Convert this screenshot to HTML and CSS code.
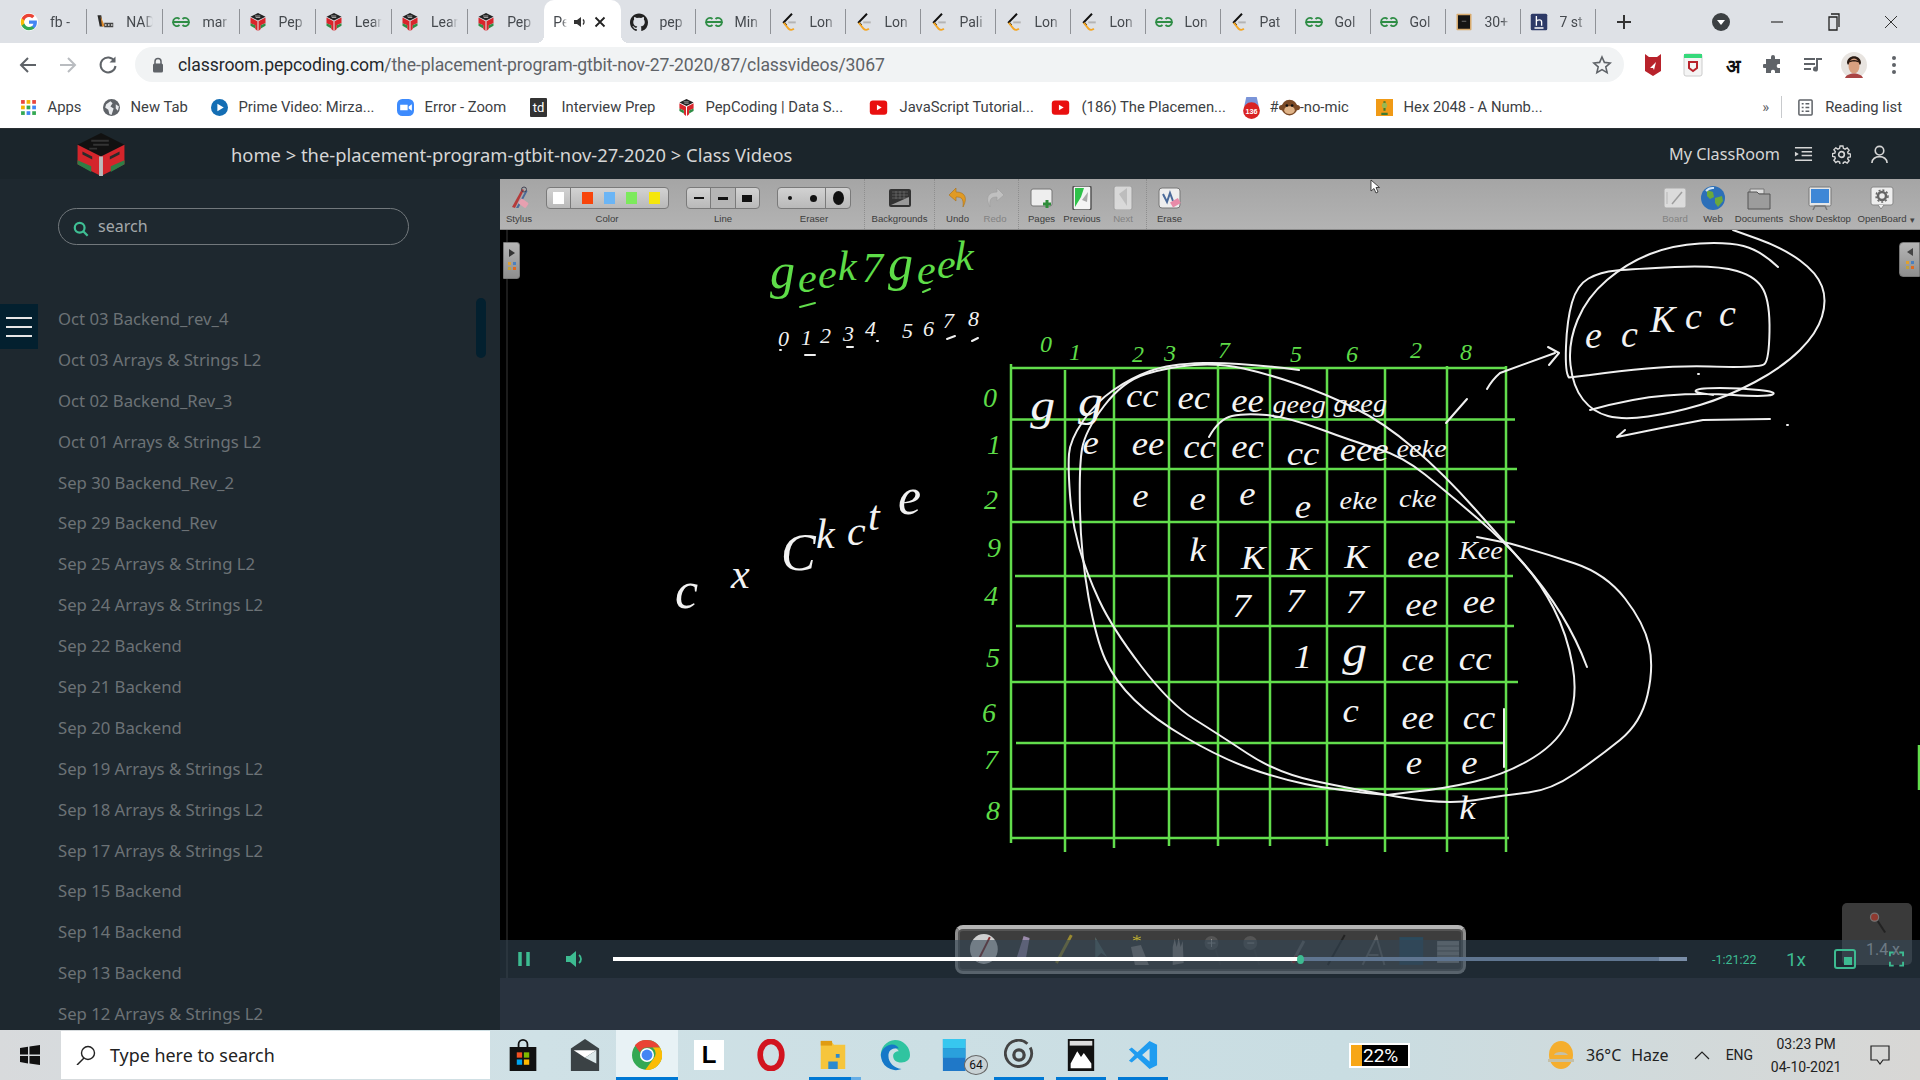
FILE: index.html
```html
<!DOCTYPE html>
<html lang="en">
<head>
<meta charset="utf-8">
<title>Class Videos</title>
<link rel="stylesheet" href="styles.css">
</head>
<body>
<svg class="sprite" aria-hidden="true">
  <symbol id="g" viewBox="0 0 24 24"><circle cx="12" cy="12" r="12" fill="#fff"/><path fill="#4285F4" d="M22.56 12.25c0-.78-.07-1.53-.2-2.25H12v4.26h5.92c-.26 1.37-1.04 2.53-2.21 3.31v2.77h3.57c2.08-1.92 3.28-4.74 3.28-8.09z"/><path fill="#34A853" d="M12 23c2.97 0 5.46-.98 7.28-2.66l-3.57-2.77c-.98.66-2.23 1.06-3.71 1.06-2.86 0-5.29-1.93-6.16-4.53H2.18v2.84C3.99 20.53 7.7 23 12 23z"/><path fill="#FBBC05" d="M5.84 14.09c-.22-.66-.35-1.36-.35-2.09s.13-1.43.35-2.09V7.07H2.18C1.43 8.55 1 10.22 1 12s.43 3.45 1.18 4.93l3.66-2.84z"/><path fill="#EA4335" d="M12 5.38c1.62 0 3.06.56 4.21 1.64l3.15-3.15C17.45 2.09 14.97 1 12 1 7.7 1 3.99 3.47 2.18 7.07l3.66 2.84c.87-2.6 3.3-4.53 6.16-4.53z"/></symbol>
  <symbol id="nad" viewBox="0 0 24 24"><path d="M2 3h5l2 15H5z" fill="#2a2a2a"/><path d="M6 4l6 14H8z" fill="#d9872b"/><path d="M11 13h12v6H11z" fill="#444"/><path d="M12 15h2v2h-2zm4 0h2v2h-2zm4 0h2v2h-2z" fill="#ddd"/></symbol>
  <symbol id="gfg" viewBox="0 0 24 24"><g fill="none" stroke="#2f8d46" stroke-width="2.4"><path d="M12 12H1.500a5 5 0 0 1 8.500-4M12 12h10.500a5 5 0 0 0-8.500-4"/><path d="M1.500 12a5 5 0 0 0 8.500 4M22.500 12a5 5 0 0 1-8.500 4"/></g></symbol>
  <symbol id="pep" viewBox="0 0 24 24"><path d="M12 0l10 5-10 5L2 5z" fill="#222"/><path d="M8 4h7M9 6h6" stroke="#ddd" stroke-width=".9"/><path d="M2 6l9.300 5V24l-3-2.600v-5L2 13.500z" fill="#d9252b"/><path d="M22 6l-9.300 5V24l3-2.600v-5l6.300-3z" fill="#d9252b"/><path d="M2 13.500v3.500l6.300 3.500v-4.200zM22 13.500v3.500l-6.300 3.500v-4.200z" fill="#2f8d46"/></symbol>
  <symbol id="lc" viewBox="0 0 24 24"><path d="M16 1L5 12.500l3.500 4" fill="none" stroke="#111" stroke-width="2.600"/><path d="M5 13l6.500 8c2 2 5 1.800 7-.2" fill="none" stroke="#f5a623" stroke-width="2.600"/><path d="M11 12.500h10" stroke="#b4b4b4" stroke-width="2.600"/></symbol>
  <symbol id="gh" viewBox="0 0 24 24"><path fill="#222" d="M12 .5C5.37.5 0 5.87 0 12.5c0 5.3 3.44 9.8 8.2 11.39.6.11.82-.26.82-.58v-2.03c-3.34.73-4.04-1.61-4.04-1.61-.55-1.39-1.33-1.76-1.33-1.76-1.09-.74.08-.73.08-.73 1.2.09 1.84 1.24 1.84 1.24 1.07 1.83 2.81 1.3 3.49 1 .11-.78.42-1.3.76-1.6-2.67-.3-5.47-1.33-5.47-5.93 0-1.31.47-2.38 1.24-3.22-.12-.3-.54-1.52.12-3.18 0 0 1.01-.32 3.3 1.23a11.5 11.5 0 0 1 6 0c2.29-1.55 3.3-1.23 3.3-1.23.66 1.66.24 2.88.12 3.18.77.84 1.24 1.91 1.24 3.22 0 4.61-2.81 5.63-5.48 5.92.43.37.81 1.1.81 2.22v3.29c0 .32.22.7.83.58A12 12 0 0 0 24 12.5C24 5.87 18.63.5 12 .5z"/></symbol>
  <symbol id="thirty" viewBox="0 0 24 24"><rect x="2" y="1" width="20" height="22" rx="1" fill="#d8ab6e"/><rect x="4" y="3" width="16" height="18" fill="#141414"/><path d="M9 11h6" stroke="#888"/></symbol>
  <symbol id="hh" viewBox="0 0 24 24"><rect x="1" y="1" width="22" height="22" rx="2" fill="#2d3a67"/><path d="M8.500 4v13M8.500 11c1-2 7-3 7 1v5M6 20h12" fill="none" stroke="#fff" stroke-width="1.800"/></symbol>
  <symbol id="yt" viewBox="0 0 24 24"><rect x="1" y="3" width="22" height="18" rx="4" fill="#e91010"/><path d="M10 8.500l6 3.500-6 3.500z" fill="#fff"/></symbol>
</svg>

<header class="browser">
  <div class="tabstrip">
    <div class="tab wide"><div class="tab-in"><svg class="fav"><use href="#g"/></svg><span class="tab-t">fb -</span></div></div>
    <div class="tab wide"><div class="tab-in"><svg class="fav"><use href="#nad"/></svg><span class="tab-t">NAD</span></div></div>
    <div class="tab wide"><div class="tab-in"><svg class="fav"><use href="#gfg"/></svg><span class="tab-t">mar</span></div></div>
    <div class="tab wide"><div class="tab-in"><svg class="fav"><use href="#pep"/></svg><span class="tab-t">Pep</span></div></div>
    <div class="tab wide"><div class="tab-in"><svg class="fav"><use href="#pep"/></svg><span class="tab-t">Lear</span></div></div>
    <div class="tab wide"><div class="tab-in"><svg class="fav"><use href="#pep"/></svg><span class="tab-t">Lear</span></div></div>
    <div class="tab wide nosep"><div class="tab-in"><svg class="fav"><use href="#pep"/></svg><span class="tab-t">Pep</span></div></div>
    <div class="tab wide active"><div class="tab-in"><span class="tab-t short">Pe</span>
      <svg class="tab-ico" viewBox="0 0 14 14"><path d="M1 5h3l4-3v10l-4-3H1z" fill="#333"/><path d="M10 4.500a3.500 3.500 0 0 1 0 5" fill="none" stroke="#333" stroke-width="1.300"/></svg>
      <svg class="tab-ico" viewBox="0 0 14 14"><path d="M2.500 2.500l9 9M11.500 2.500l-9 9" stroke="#222" stroke-width="1.800"/></svg></div></div>
    <div class="tab"><div class="tab-in"><svg class="fav"><use href="#gh"/></svg><span class="tab-t">pep</span></div></div>
    <div class="tab"><div class="tab-in"><svg class="fav"><use href="#gfg"/></svg><span class="tab-t">Min</span></div></div>
    <div class="tab"><div class="tab-in"><svg class="fav"><use href="#lc"/></svg><span class="tab-t">Lon</span></div></div>
    <div class="tab"><div class="tab-in"><svg class="fav"><use href="#lc"/></svg><span class="tab-t">Lon</span></div></div>
    <div class="tab"><div class="tab-in"><svg class="fav"><use href="#lc"/></svg><span class="tab-t">Pali</span></div></div>
    <div class="tab"><div class="tab-in"><svg class="fav"><use href="#lc"/></svg><span class="tab-t">Lon</span></div></div>
    <div class="tab"><div class="tab-in"><svg class="fav"><use href="#lc"/></svg><span class="tab-t">Lon</span></div></div>
    <div class="tab"><div class="tab-in"><svg class="fav"><use href="#gfg"/></svg><span class="tab-t">Lon</span></div></div>
    <div class="tab"><div class="tab-in"><svg class="fav"><use href="#lc"/></svg><span class="tab-t">Pat</span></div></div>
    <div class="tab"><div class="tab-in"><svg class="fav"><use href="#gfg"/></svg><span class="tab-t">Gol</span></div></div>
    <div class="tab"><div class="tab-in"><svg class="fav"><use href="#gfg"/></svg><span class="tab-t">Gol</span></div></div>
    <div class="tab"><div class="tab-in"><svg class="fav"><use href="#thirty"/></svg><span class="tab-t">30+</span></div></div>
    <div class="tab"><div class="tab-in"><svg class="fav"><use href="#hh"/></svg><span class="tab-t">7 st</span></div></div>
    <svg class="newtab" viewBox="0 0 16 16"><path d="M8 1v14M1 8h14" stroke="#333" stroke-width="2"/></svg>
    <svg class="tabsearch" viewBox="0 0 18 18"><circle cx="9" cy="9" r="9" fill="#3c4043"/><path d="M5 7h8l-4 5z" fill="#fff"/></svg>
    <div class="winctl">
      <svg viewBox="0 0 14 14"><path d="M1 7h12" stroke="#333" stroke-width="1.200"/></svg>
      <svg viewBox="0 0 14 18"><path d="M4 1h8v13M2 4h8v13H2z" fill="none" stroke="#222" stroke-width="1.300"/></svg>
      <svg viewBox="0 0 14 14"><path d="M1 1l12 12M13 1L1 13" stroke="#333" stroke-width="1"/></svg>
    </div>
  </div>
  <div class="toolbar">
    <svg class="nav" viewBox="0 0 20 20"><path d="M18 10H3M10 3l-7 7 7 7" fill="none" stroke="#5f6368" stroke-width="2"/></svg>
    <svg class="nav" viewBox="0 0 20 20"><path d="M2 10h15M10 3l7 7-7 7" fill="none" stroke="#b9bcc0" stroke-width="2"/></svg>
    <svg class="nav" viewBox="0 0 20 20"><path d="M16.500 6A7.500 7.500 0 1 0 17.500 11" fill="none" stroke="#5f6368" stroke-width="2"/><path d="M17.500 1.500v6h-6z" fill="#5f6368"/></svg>
    <div class="omni">
      <svg class="lock" viewBox="0 0 12 16"><path d="M3 7V4.500a3 3 0 0 1 6 0V7" fill="none" stroke="#5f6368" stroke-width="1.500"/><rect x="1" y="6.500" width="10" height="9" rx="1.500" fill="#5f6368"/></svg>
      <span class="url"><b>classroom.pepcoding.com</b>/the-placement-program-gtbit-nov-27-2020/87/classvideos/3067</span>
      <svg class="star" viewBox="0 0 20 20"><path d="M10 2l2.400 5.400 5.800.6-4.400 3.900 1.300 5.700-5.100-3-5.100 3 1.300-5.700L1.800 8l5.800-.6z" fill="none" stroke="#5f6368" stroke-width="1.600"/></svg>
    </div>
    <div class="exts">
      <svg viewBox="0 0 20 24"><path d="M2 1l4 3h8l4-3v17l-8 5-8-5z" fill="#b8222b"/><path d="M7 15l6-6-2 8-1-2z" fill="#fff"/></svg>
      <svg viewBox="0 0 20 24"><rect x="1" y="1" width="18" height="22" rx="2" fill="#f4f4f4" stroke="#ccc"/><rect x="1" y="1" width="18" height="4" fill="#36d97b"/><path d="M6 9h8v6l-4 3-4-3z" fill="none" stroke="#b8222b" stroke-width="2"/></svg>
      <span class="ext-hi">अ</span>
      <svg viewBox="0 0 20 20"><path d="M8 2a2 2 0 0 1 4 0v2h5v5h-2a2.200 2.200 0 0 0 0 4h2v5h-5v-2a2.200 2.200 0 0 0-4 0v2H3v-5H1a2.200 2.200 0 0 1 0-4h2V4h5z" fill="#5f6368"/></svg>
      <svg viewBox="0 0 20 20"><path d="M1 4h11M1 9h11M1 14h7" stroke="#5f6368" stroke-width="2"/><path d="M15 3v11a2.500 2.500 0 1 1-2-2.400V3h6v2h-4z" fill="#5f6368"/></svg>
      <svg class="avatar" viewBox="0 0 26 26"><circle cx="13" cy="13" r="13" fill="#e8e4e0"/><path d="M6 11c0-9 14-9 14 0l-1 2c-2-3-10-3-12 0z" fill="#2a1a12"/><ellipse cx="13" cy="14" rx="5.500" ry="7.500" fill="#d8a080"/><path d="M7 11c1-4 11-4 12 0-3-2-9-2-12 0z" fill="#2a1a12"/><path d="M4 26c2-6 16-6 18 0z" fill="#a44"/></svg>
      <svg viewBox="0 0 20 20"><circle cx="10" cy="3" r="2" fill="#5f6368"/><circle cx="10" cy="10" r="2" fill="#5f6368"/><circle cx="10" cy="17" r="2" fill="#5f6368"/></svg>
    </div>
  </div>
  <div class="bookmarks">
    <div class="bm"><svg class="bm-i" viewBox="0 0 16 16"><path d="M1 1h3.500v3.500H1z" fill="#e8453c"/><path d="M6.200 1h3.500v3.500H6.200z" fill="#f4b400"/><path d="M11.500 1H15v3.500h-3.500z" fill="#e8453c"/><path d="M1 6.200h3.500v3.500H1z" fill="#f4b400"/><path d="M6.200 6.200h3.500v3.500H6.200z" fill="#34a853"/><path d="M11.500 6.200H15v3.500h-3.500z" fill="#4285f4"/><path d="M1 11.500h3.500V15H1z" fill="#34a853"/><path d="M6.200 11.500h3.500V15H6.200z" fill="#4285f4"/><path d="M11.500 11.500H15V15h-3.500z" fill="#34a853"/></svg><span>Apps</span></div>
    <div class="bm"><svg class="bm-i" viewBox="0 0 16 16"><circle cx="8" cy="8" r="8" fill="#5f6368"/><path d="M3 5l4-3 2 2-2 3 3 2-2 6-2-1-1-4-3-2zM12 5l3 2-1 4-2-2z" fill="#e8eaed"/></svg><span>New Tab</span></div>
    <div class="bm"><svg class="bm-i" viewBox="0 0 16 16"><circle cx="8" cy="8" r="8" fill="#146eb4"/><path d="M6 4.500l6 3.500-6 3.500z" fill="#fff"/></svg><span>Prime Video: Mirza...</span></div>
    <div class="bm"><svg class="bm-i" viewBox="0 0 16 16"><rect width="16" height="16" rx="5" fill="#3d8bfd"/><path d="M3 5.500h7v5H3zM11 7l3-2v6l-3-2z" fill="#fff"/></svg><span>Error - Zoom</span></div>
    <div class="bm"><span class="td">td</span><span>Interview Prep</span></div>
    <div class="bm"><svg class="bm-i"><use href="#pep"/></svg><span>PepCoding | Data S...</span></div>
    <div class="bm"><svg class="bm-i yt"><use href="#yt"/></svg><span>JavaScript Tutorial...</span></div>
    <div class="bm"><svg class="bm-i yt"><use href="#yt"/></svg><span>(186) The Placemen...</span></div>
    <div class="bm"><svg class="bm-i tall" viewBox="0 0 16 22"><path d="M3 1h10l2 9H1z" fill="#7a94d8"/><circle cx="8" cy="14" r="8" fill="#d92323"/><text x="8" y="17.500" class="bm-badge">136</text></svg><span class="bm-mix">#<svg class="monkey" viewBox="0 0 16 16"><circle cx="8" cy="8" r="6" fill="#7b4a26"/><circle cx="2" cy="8" r="2" fill="#7b4a26"/><circle cx="14" cy="8" r="2" fill="#7b4a26"/><ellipse cx="8" cy="10" rx="4" ry="3" fill="#e0b488"/><circle cx="6" cy="6.500" r="1" fill="#111"/><circle cx="10" cy="6.500" r="1" fill="#111"/></svg>-no-mic</span></div>
    <div class="bm"><svg class="bm-i" viewBox="0 0 16 16"><rect width="16" height="16" fill="#f09a16"/><path d="M8 2v9M5 14h6" stroke="#3d7a30" stroke-width="2"/><circle cx="8" cy="6" r="2.500" fill="#9ab850"/></svg><span>Hex 2048 - A Numb...</span></div>
    <div class="bm-right">
      <span class="more">»</span>
      <svg class="bm-i" viewBox="0 0 16 18"><rect x="1" y="1" width="14" height="16" rx="1" fill="none" stroke="#5f6368" stroke-width="1.600"/><path d="M4 5h2M8 5h4M4 9h2M8 9h4M4 13h2M8 13h4" stroke="#5f6368" stroke-width="1.400"/></svg>
      <span>Reading list</span>
    </div>
  </div>
</header>

<nav class="apphead">
  <svg class="logo" viewBox="0 0 48 44">
    <path d="M24 0l24 12-24 12L0 12z" fill="#111"/><path d="M14 8h18M16 12h16M12 16h8" stroke="#333" stroke-width="2"/>
    <path d="M0 12l24 12v20L0 32z" fill="#d4252b"/><path d="M48 12L24 24v20l24-12z" fill="#d4252b"/>
    <path d="M0 28l14 6v6L0 32zM48 28l-14 6v6l14-8z" fill="#2f7d46"/>
    <path d="M22 24h4v20h-4z" fill="#bbb"/><path d="M5 19l10 5v3L5 22zM43 19l-10 5v3l10-5z" fill="#2b2b2b"/>
  </svg>
  <div class="crumb">home &gt; the-placement-program-gtbit-nov-27-2020 &gt; Class Videos</div>
  <div class="head-right">
    <span class="room">My ClassRoom</span>
    <svg viewBox="0 0 20 18"><path d="M1 2h18M8 6h11M8 10h11M1 15h18" stroke="#d6d6d6" stroke-width="1.600"/><path d="M1 6l4 2.500L1 11z" fill="#d6d6d6"/></svg>
    <svg viewBox="0 0 20 20"><circle cx="10" cy="10" r="3" fill="none" stroke="#d6d6d6" stroke-width="1.700"/><path d="M8.500 1h3l.5 2.500 1.800.8L16 3l2 2.500-1.500 2 .5 1.500 2.500.5v3l-2.500.5-.5 1.500 1.500 2-2 2.500-2.200-1.300-1.800.8-.5 2.400h-3L8 17.900l-1.800-.8L4 18.400 2 16l1.500-2-.5-1.500L.5 12V9L3 8.500 3.500 7 2 5l2-2 2.200 1.300L8 3.500z" fill="none" stroke="#d6d6d6" stroke-width="1.500"/></svg>
    <svg viewBox="0 0 20 20"><circle cx="10" cy="6" r="4.500" fill="none" stroke="#d6d6d6" stroke-width="1.700"/><path d="M2 19c0-9 16-9 16 0" fill="none" stroke="#d6d6d6" stroke-width="1.700"/></svg>
  </div>
</nav>

<main class="main">
  <aside class="sidebar">
    <div class="search">
      <svg viewBox="0 0 18 18"><circle cx="7.500" cy="7.500" r="5.500" fill="none" stroke="#3fbf94" stroke-width="2.500"/><path d="M11.500 11.500l5 5" stroke="#3fbf94" stroke-width="2.500"/></svg>
      <span>search</span>
    </div>
    <ul class="list">
      <li>Oct 03 Backend_rev_4</li>
      <li>Oct 03 Arrays &amp; Strings L2</li>
      <li>Oct 02 Backend_Rev_3</li>
      <li>Oct 01 Arrays &amp; Strings L2</li>
      <li>Sep 30 Backend_Rev_2</li>
      <li>Sep 29 Backend_Rev</li>
      <li>Sep 25 Arrays &amp; String L2</li>
      <li>Sep 24 Arrays &amp; Strings L2</li>
      <li>Sep 22 Backend</li>
      <li>Sep 21 Backend</li>
      <li>Sep 20 Backend</li>
      <li>Sep 19 Arrays &amp; Strings L2</li>
      <li>Sep 18 Arrays &amp; Strings L2</li>
      <li>Sep 17 Arrays &amp; Strings L2</li>
      <li>Sep 15 Backend</li>
      <li>Sep 14 Backend</li>
      <li>Sep 13 Backend</li>
      <li>Sep 12 Arrays &amp; Strings L2</li>
    </ul>
    <div class="burger"><i></i><i></i><i></i></div>
    <div class="thumb"></div>
  </aside>

  <section class="stage">
    <div class="tools">
      <div class="tool w38"><div class="ti"><svg class="i24" viewBox="0 0 24 24"><path d="M5 21L15 3l2 1L8 22z" fill="#b53a3a"/><path d="M9 22L19 4l1.500 1-9 17z" fill="#4a6a9a"/><circle cx="17" cy="3.500" r="2.500" fill="none" stroke="#445" stroke-width="1"/><rect x="12" y="14" width="9" height="6" rx="1" transform="rotate(35 16 17)" fill="#e6a0b0"/></svg></div><div class="tl">Stylus</div></div>
      <div class="tool w138"><div class="ti"><div class="seg colors"><span class="cell-w"><i class="sw white"></i></span><i class="sw red"></i><i class="sw blue"></i><i class="sw green"></i><i class="sw yellow"></i></div></div><div class="tl">Color</div></div>
      <div class="tool w94"><div class="ti"><div class="seg lines"><span><i class="ln l1"></i></span><span class="on"><i class="ln l2"></i></span><span><i class="ln l3"></i></span></div></div><div class="tl">Line</div></div>
      <div class="tool w88"><div class="ti"><div class="seg erasers"><span><i class="dot d1"></i></span><span><i class="dot d2"></i></span><span class="last"><i class="dot d3"></i></span></div></div><div class="tl">Eraser</div></div>
      <div class="tool w70 sep push6"><div class="ti"><svg class="i24" viewBox="0 0 24 24"><rect x="1" y="3" width="22" height="18" rx="2" fill="#333"/><path d="M4 6h16M4 9h16M4 12h16M8 5v8M12 5v8M16 5v8" stroke="#777" stroke-width=".6"/><path d="M3 19L21 11v8z" fill="#999"/></svg></div><div class="tl">Backgrounds</div></div>
      <div class="tool w46 sep"><div class="ti"><svg class="i24" viewBox="0 0 24 24"><path d="M10 2L3 9l7 6v-4c5 0 8 1 7 10 5-9 2-15-7-15z" fill="#e09a24" stroke="#a9701a" stroke-width=".6"/></svg></div><div class="tl">Undo</div></div>
      <div class="tool w30 mr8"><div class="ti dim"><svg class="i24" viewBox="0 0 24 24"><path d="M14 2l7 7-7 6v-4c-5 0-8 1-7 10C2 12 5 6 14 6z" fill="#c8c8c8" stroke="#999" stroke-width=".6"/></svg></div><div class="tl off">Redo</div></div>
      <div class="tool w46 sep"><div class="ti"><svg class="i24" viewBox="0 0 24 24"><rect x="1" y="3" width="21" height="17" rx="2" fill="#eee" stroke="#777"/><path d="M17 14v8M13 18h8" stroke="#2f8d3a" stroke-width="3"/></svg></div><div class="tl">Pages</div></div>
      <div class="tool w36"><div class="ti"><svg class="i24" viewBox="0 0 24 24"><rect x="3" y="0" width="18" height="24" rx="2" fill="#f4f4f4" stroke="#555" stroke-width="1.500"/><path d="M5 2h9l-3 9-6 10z" fill="#2fc24a"/><path d="M12 14l6-8-1 10z" fill="#aaa"/></svg></div><div class="tl">Previous</div></div>
      <div class="tool w46"><div class="ti dim"><svg class="i24" viewBox="0 0 24 24"><rect x="3" y="0" width="18" height="24" rx="2" fill="#e8e8e8" stroke="#999"/><path d="M8 8l8-6v18z" fill="#c4c4c4"/></svg></div><div class="tl off">Next</div></div>
      <div class="tool w46 sep"><div class="ti"><svg class="i24" viewBox="0 0 24 24"><rect x="1" y="2" width="21" height="20" rx="3" fill="#eee" stroke="#777"/><path d="M5 8l4 8 3-9 3 8" stroke="#4a6a9a" stroke-width="2" fill="none"/><rect x="13" y="14" width="9" height="6" transform="rotate(-30 17 17)" fill="#e88aa8"/></svg></div><div class="tl">Erase</div></div>
      <div class="tools-right">
        <div class="tool w38"><div class="ti dim"><svg class="i24" viewBox="0 0 24 24"><rect x="1" y="2" width="22" height="20" rx="2" fill="#ececec" stroke="#aaa"/><path d="M9 18L19 6" stroke="#999" stroke-width="1.500"/><path d="M4 6v12" stroke="#bbb"/></svg></div><div class="tl off">Board</div></div>
        <div class="tool w38"><div class="ti"><svg class="i24" viewBox="0 0 24 24"><circle cx="12" cy="12" r="12" fill="#2c6fb8"/><path d="M6 4l6 2 1 5-4 2-3-3zM14 12l7-2 1 5-5 6-3-4z" fill="#6aa83c"/><path d="M5 5a9 9 0 0 1 8-3" stroke="#cfe4f6" stroke-width="2" fill="none"/></svg></div><div class="tl">Web</div></div>
        <div class="tool w54"><div class="ti"><svg class="i24" viewBox="0 0 24 24"><path d="M3 3h14v5H3z" fill="#ddd" stroke="#777"/><path d="M1 6h9l2 2h11v15H1z" fill="#9c9c9c" stroke="#555"/></svg></div><div class="tl">Documents</div></div>
        <div class="tool w68"><div class="ti"><svg class="i24" viewBox="0 0 24 24"><rect x="1" y="1" width="22" height="19" rx="1.500" fill="#e6e6e6" stroke="#777"/><rect x="3" y="3" width="18" height="14" fill="#3f87d6"/><path d="M5 24l2-4h10l2 4" fill="none" stroke="#777" stroke-width="1.500"/></svg></div><div class="tl">Show Desktop</div></div>
        <div class="tool w56"><div class="ti"><svg class="i24" viewBox="0 0 24 24"><rect x="1" y="1" width="22" height="18" rx="2" fill="#eee" stroke="#888"/><path d="M8 19l3 4 3-4" fill="#eee" stroke="#888"/><circle cx="12" cy="10" r="4" fill="none" stroke="#666" stroke-width="2.500"/><circle cx="12" cy="10" r="6" fill="none" stroke="#666" stroke-width="1.500" stroke-dasharray="2 2"/></svg></div><div class="tl">OpenBoard</div></div>
        <div class="caret">▾</div>
      </div>
      <svg class="cursor" viewBox="0 0 10 15"><path d="M1 1v11l3-2.500 2 4.500 2-1-2-4.500h3.500z" fill="#fff" stroke="#222" stroke-width=".8"/></svg>
    </div>

    <div class="canvas">
      <svg class="board" viewBox="500 230 1420 748">
        <path class="edge" d="M507 230V978"/>
        <g class="gridlines">
          <path d="M1011 364V843M1065 370V852M1114 368V848M1169 368V846M1218 364V846M1270 368V846M1327 368V846M1385 368V852M1447 366V852M1506 366V852"/>
          <path d="M1010 368H1507M1010 419.500H1515M1011 469H1517M1012 522H1515M1015 576H1513M1016 626H1514M1011 682H1518M1016 743H1504M1010 789H1508M1011 838H1509"/>
          <path d="M1919 745V790"/>
        </g>
        <g class="strokes">
          <path d="M1387 795Q1334 790 1305 784T1247.500 767.500T1186.500 738T1134.500 700T1105.500 660T1088.500 597T1080 511T1082 449T1104 406T1146 374T1194 365T1243.500 368.500T1297 384T1354.500 408T1413.500 448T1475 509T1523 563T1553.500 608T1572.500 665T1569 718.500T1533.500 757.500T1475 781.500T1415 791.500L1387 795"/>
          <path d="M1299 370Q1238 362 1203.500 363T1150 371T1113.500 390T1083 421T1069 454T1070 495T1079 547T1099 600T1141 666T1194 719T1247.500 753.500T1314.500 781T1399 797T1476 800T1528.500 792.500T1575 773.500T1620 740T1647.500 695T1649 645T1625 598.500T1575 563.500T1510 543.500L1477 537"/>
          <path d="M1209 437Q1219 419 1232 416T1266.500 415T1320 429T1377 448.500T1425 474.500T1477 518T1523 563"/>
          <path d="M1523 563Q1567 613 1587 667"/>
          <path d="M1487 389Q1492 380 1500 373L1555 353"/>
          <path d="M1548 347L1559 353L1549 365"/>
          <path d="M1467 399L1446 423"/>
          <path d="M1504 709V767"/>
          <path d="M1590 375Q1660 365 1710 366.500T1764.500 364T1769.500 331.500T1763.500 290T1737 271T1675 267T1616.500 270.500T1588.500 278.500T1572 302.500T1566 346.500T1569 377.500L1590 375"/>
          <path d="M1778 267Q1760 250 1743.500 246T1700 243.500T1650 254T1607 280T1577.500 320T1570.500 365T1583 399.500T1608 416T1648 416.500T1700 405T1755 382T1800 350T1822 316.500T1822 286.500T1800 260.500T1758 239L1733 230"/>
          <path d="M1590 410Q1633 398 1666.500 395.500T1733.500 395T1772.500 394.500T1759 390T1720 388T1696.500 390T1703 393.500L1713 395"/>
          <path d="M1617 437Q1660 428 1703 420L1770 419M1617 437L1625 430"/>
          <path d="M805 355H815M847 347H853M947 339L955 336M972 341L978 338"/>
          <path d="M1698 374h1M1787 425h1M780 350h1M877 341h1"/>
          <path class="grn" d="M800 307L815 303M923 292L930 289"/>
        </g>
        <g class="ink green">
          <text class="bigg" x="770" y="288">g</text>
          <text class="big" x="798 818 838 862" y="292 288 280 282">eek7</text>
          <text class="bigg" x="888" y="280">g</text>
          <text class="big" x="917 937 955" y="284 278 270">eek</text>
          <text class="num" x="1040" y="352">0</text><text class="num" x="1069" y="360">1</text><text class="num" x="1132" y="362">2</text><text class="num" x="1164" y="361">3</text><text class="num" x="1218" y="358">7</text><text class="num" x="1290" y="362">5</text><text class="num" x="1346" y="362">6</text><text class="num" x="1410" y="358">2</text><text class="num" x="1460" y="360">8</text>
          <text class="lnum" x="983" y="407">0</text><text class="lnum" x="987" y="454">1</text><text class="lnum" x="984" y="509">2</text><text class="lnum" x="987" y="557">9</text><text class="lnum" x="984" y="605">4</text><text class="lnum" x="986" y="667">5</text><text class="lnum" x="982" y="722">6</text><text class="lnum" x="984" y="769">7</text><text class="lnum" x="986" y="820">8</text>
        </g>
        <g class="ink white">
          <text class="mid" x="778 801 820 843 865 902 923 943 968" y="346 345 343 341 336 338 336 328 326">012345678</text>
          <text class="huge" x="675" y="608">c</text>
          <text class="xl" x="731" y="588">x</text>
          <text class="huge" x="781" y="570">C</text>
          <text class="xl" x="816" y="548">k</text>
          <text class="xl" x="847" y="545">c</text>
          <text class="xl" x="868" y="530">t</text>
          <text class="huge" x="898" y="514">e</text>
          <text class="box" x="1585" y="348">e</text><text class="box" x="1621" y="347">c</text><text class="box" x="1650" y="332">K</text><text class="box" x="1685" y="329">c</text><text class="box" x="1719" y="326">c</text>
        </g>
        <g class="cells" transform="translate(970 330) scale(.3827 .3444)">
          <text class="c-lg" x="190" y="260">g</text><text class="c-lg" x="315" y="250">g</text><text x="450" y="225">cc</text><text x="585" y="228">ec</text><text x="725" y="238">ee</text><text class="c-sm" x="860" y="240">geeg</text><text class="c-sm" x="1020" y="238">geeg</text>
          <text x="315" y="360">e</text><text x="465" y="362">ee</text><text x="600" y="372">cc</text><text x="725" y="372">ec</text><text x="870" y="392">cc</text><text x="1030" y="380">eee</text><text class="c-sm" x="1180" y="368">eeke</text>
          <text x="445" y="515">e</text><text x="595" y="522">e</text><text x="725" y="508">e</text><text x="870" y="545">e</text><text class="c-sm" x="1015" y="520">eke</text><text class="c-sm" x="1170" y="515">cke</text>
          <text x="595" y="672">k</text><text x="740" y="695">K</text><text x="860" y="698">K</text><text x="1010" y="692">K</text><text x="1185" y="690">ee</text><text class="c-sm" x="1335" y="665">Kee</text>
          <text x="710" y="832">7</text><text x="850" y="818">7</text><text x="1005" y="822">7</text><text x="1180" y="830">ee</text><text x="1330" y="822">ee</text>
          <text x="870" y="982">1</text><text class="c-lg" x="1005" y="975">g</text><text x="1170" y="990">ce</text><text x="1320" y="988">cc</text>
          <text x="995" y="1138">c</text><text x="1170" y="1160">ee</text><text x="1330" y="1158">cc</text>
          <text x="1160" y="1288">e</text><text x="1305" y="1290">e</text>
          <text x="1300" y="1420">k</text>
        </g>
      </svg>

      <div class="side-tab left"><svg viewBox="0 0 12 30"><path d="M3 3l6 4-6 4z" fill="#333"/><path d="M2 16h3v3H2z" fill="#e0a030"/><path d="M7 16h3v3H7z" fill="#4a80c0"/><path d="M2 21h3v3H2z" fill="#c0a040"/><path d="M7 21h3v3H7z" fill="#e06a20"/></svg></div>
      <div class="side-tab right"><svg viewBox="0 0 12 30"><path d="M9 3L3 7l6 4z" fill="#444"/><path d="M2 16h3v3H2z" fill="#e0a030"/><path d="M7 16h3v3H7z" fill="#4a80c0"/><path d="M2 21h3v3H2z" fill="#c0a040"/><path d="M7 21h3v3H7z" fill="#e06a20"/></svg></div>

      <div class="dock">
        <svg viewBox="0 0 500 34">
          <ellipse cx="22" cy="16" rx="14" ry="15" fill="#cfcfcf"/><path d="M16 28L28 4" stroke="#8a3030" stroke-width="2"/>
          <path d="M54 28L62 3l6 2-4 22z" fill="#9a8aaa"/>
          <path d="M95 30L110 2" stroke="#9a8a30" stroke-width="3"/>
          <path d="M134 4v22l6-6 6 4z" fill="#566"/>
          <path d="M170 14l10-2 8 20h-14z" fill="#8a8482"/><path d="M176 2v6M172 4l8 3M180 4l-8 3" stroke="#c0b030"/>
          <path d="M212 32V14l2-8 2 8 2-9 2 9 2-6 1 22z" fill="#8a8482"/>
          <circle cx="251" cy="10" r="7" fill="#555"/><path d="M247 10h8M251 6v8" stroke="#999"/><path d="M255 16l5 16" stroke="#444" stroke-width="2"/>
          <circle cx="290" cy="10" r="7" fill="#555"/><path d="M287 10h7" stroke="#999"/><path d="M294 16l5 16" stroke="#444" stroke-width="2"/>
          <path d="M332 30l12-22" stroke="#666" stroke-width="3"/><path d="M333 30l4-7" stroke="#922" stroke-width="3"/>
          <path d="M368 32L385 2" stroke="#222" stroke-width="2"/>
          <path d="M403 32L417 4l8 28M409 22h10" fill="none" stroke="#666" stroke-width="2"/>
          <rect x="440" y="4" width="24" height="28" fill="#2c4a5c"/>
          <rect x="478" y="8" width="24" height="22" fill="#8a8a8a"/><path d="M478 13h24M478 18h24M478 23h24" stroke="#555"/>
        </svg>
      </div>

      <div class="magnifier">
        <svg viewBox="0 0 24 32"><circle cx="9" cy="10" r="5" fill="#8f3a30" stroke="#777" stroke-width="1.500"/><path d="M13 15l9 14" stroke="#222" stroke-width="2.500"/></svg>
        <span>1.4 x</span>
      </div>

      <div class="controls">
        <div class="ctl w50"><svg class="ico16" viewBox="0 0 14 16"><path d="M2 1v14M10 1v14" stroke="#3dbb91" stroke-width="3.500"/></svg></div>
        <div class="ctl w50"><svg class="ico20" viewBox="0 0 20 20"><path d="M1 7h4l6-5v16l-6-5H1z" fill="#3dbb91"/><path d="M14 6a5 5 0 0 1 0 8" fill="none" stroke="#3dbb91" stroke-width="1.800"/></svg></div>
        <div class="bar"><div class="played"></div><div class="knob"></div><div class="buffered"></div><div class="rest"></div></div>
        <span class="time">-1:21:22</span>
        <span class="speed">1x</span>
        <svg class="pip" viewBox="0 0 22 20"><rect x="1" y="1" width="20" height="18" rx="2" fill="none" stroke="#3dbb91" stroke-width="2"/><rect x="10" y="8" width="8" height="8" fill="#3dbb91"/></svg>
        <svg class="fs" viewBox="0 0 16 16"><path d="M1 5V1h4M11 1h4v4M15 11v4h-4M5 15H1v-4" fill="none" stroke="#3dbb91" stroke-width="2"/></svg>
      </div>
    </div>
    <div class="foot"></div>
  </section>
</main>

<footer class="taskbar">
  <svg class="start" viewBox="0 0 20 20"><path d="M0 3l8-1.200V9.500H0zM9.500 1.500L20 0v9.500H9.500zM0 11h8v7.500L0 17zM9.500 11H20v9L9.500 18.500z" fill="#111"/></svg>
  <div class="tsearch">
    <svg viewBox="0 0 20 20"><circle cx="12" cy="8" r="6.500" fill="none" stroke="#222" stroke-width="1.400"/><path d="M8 13l-7 7" stroke="#222" stroke-width="1.500"/></svg>
    <span>Type here to search</span>
  </div>
  <div class="apps">
    <div class="app"><svg viewBox="0 0 30 36"><path d="M10 10V6a5 5 0 0 1 10 0v4" fill="none" stroke="#111" stroke-width="2"/><rect y="9" width="30" height="27" fill="#111"/><path d="M8 15h6v6H8z" fill="#f25022"/><path d="M16 15h6v6h-6z" fill="#7fba00"/><path d="M8 23h6v6H8z" fill="#00a4ef"/><path d="M16 23h6v6h-6z" fill="#ffb900"/></svg></div>
    <div class="app"><svg viewBox="0 0 30 34"><path d="M15 0l15 10v24H0V10z" fill="#3b4245"/><path d="M3 12h24L15 20z" fill="#fff"/><path d="M15 20l12-8v14z" fill="#dce8ea"/></svg></div>
    <div class="app run act"><svg viewBox="0 0 32 32"><circle cx="16" cy="16" r="16" fill="#34a853"/><path d="M16 0a16 16 0 0 1 13.900 8H16a8 8 0 0 0-7.500 5.200L3 5.500A16 16 0 0 1 16 0z" fill="#ea4335"/><path d="M29.900 8A16 16 0 0 1 14 31.900L22.900 20A8 8 0 0 0 22 8z" fill="#fbbc05"/><circle cx="16" cy="16" r="7.500" fill="#fff"/><circle cx="16" cy="16" r="5.800" fill="#4285f4"/></svg></div>
    <div class="app"><div class="ltile">L</div></div>
    <div class="app"><svg viewBox="0 0 30 34"><ellipse cx="15" cy="17" rx="11.500" ry="14.500" fill="none" stroke="#d2141f" stroke-width="6"/></svg></div>
    <div class="app run part"><svg viewBox="0 0 30 34"><path d="M2 2h11l3 4h12v26H2z" fill="#f6c53c"/><path d="M2 2h12v5H2z" fill="#e09c12"/><path d="M12 20h6v-4h4v4M10 24h10v8h-10z" fill="#2b8ad0"/></svg></div>
    <div class="app"><svg viewBox="0 0 32 32"><path d="M16 0a16 16 0 0 1 16 16c0 5-4 8-9 8-6 0-9-3-9-7 0-3 3-5 6-5-1-3-5-5-9-4-5 1-9 5-10 10A16 16 0 0 1 16 0z" fill="#30c4a0"/><path d="M1 15c1-5 5-9 10-10 4-1 8 1 9 4-7-1-11 2-11 8 0 7 6 13 14 14A16 16 0 0 1 1 15z" fill="#1578c8"/></svg></div>
    <div class="app"><svg viewBox="0 0 30 34"><path d="M0 0h24v34H0z" fill="#1f78c8"/><path d="M0 0h24v10H0z" fill="#37c7ef"/><path d="M0 10h24v10H0z" fill="#2aa0dc"/></svg><span class="count">64</span></div>
    <div class="app run"><svg viewBox="0 0 32 32"><path d="M25 4a14 14 0 1 0 3 4" fill="none" stroke="#444" stroke-width="3"/><circle cx="16" cy="16" r="5.500" fill="none" stroke="#444" stroke-width="3.500"/></svg></div>
    <div class="app run"><svg viewBox="0 0 28 34"><rect width="28" height="34" fill="#111"/><rect x="2" y="2" width="24" height="5" fill="#ddd"/><path d="M3 26l7-13 4 6 3-4 8 11v5H3z" fill="#fff"/></svg></div>
    <div class="app run"><svg viewBox="0 0 32 32"><path d="M23 1l8 4v22l-8 4L10 19l-6 5-3-2 6-6-6-6 3-2 6 5z" fill="#1f9cf0"/><path d="M23 9l-8 7 8 7z" fill="#d2e2e6"/></svg></div>
  </div>
  <div class="tray">
    <div class="battery"><i></i><span>22%</span></div>
    <svg class="sun" viewBox="0 0 26 28"><ellipse cx="13" cy="14" rx="12" ry="14" fill="#f5ae2e"/><path d="M0 18h26v3H0zM6 14c1-4 12-4 14 0z" fill="#c4c0a8"/></svg>
    <span class="temp">36°C</span><span class="haze">Haze</span>
    <svg class="chev" viewBox="0 0 16 10"><path d="M1 9l7-7 7 7" fill="none" stroke="#222" stroke-width="1.200"/></svg>
    <span class="eng">ENG</span>
    <div class="clock"><span>03:23 PM</span><span>04-10-2021</span></div>
    <svg class="notif" viewBox="0 0 20 20"><path d="M1 1h18v14h-6l-3 4-3-4H1z" fill="none" stroke="#222" stroke-width="1.200"/></svg>
  </div>
</footer>
</body>
</html>
```
FILE: styles.css
```css
* { box-sizing: border-box; }
html, body { margin: 0; padding: 0; }
body { width: 1920px; height: 1080px; overflow: hidden; font-family: Roboto, "Liberation Sans", sans-serif; background: #1d272e; }
.sprite { display: block; width: 0; height: 0; overflow: hidden; }

/* browser chrome */
.browser { height: 129px; background: #fff; border-bottom: 1px solid #2a2f33; }
.tabstrip { height: 43px; background: #dee1e6; display: flex; align-items: center; padding-left: 11px; }
.tab { width: 75px; height: 43px; flex: none; display: flex; align-items: center; position: relative; }
.tab.wide { width: 76.2px; }
.tab-in { flex: 1; min-width: 0; height: 25px; display: flex; align-items: center; gap: 12px; padding: 0 9px; border-right: 1px solid #8f9297; }
.tab.nosep .tab-in { border-right-color: transparent; }
.tab.active { background: #fff; height: 43px; border-radius: 10px 10px 0 0; align-self: flex-end; }
.tab.active::before, .tab.active::after { content: ""; position: absolute; bottom: 0; width: 8px; height: 8px; }
.tab.active::before { left: -8px; background: radial-gradient(circle at 0 0, transparent 8px, #fff 8px); }
.tab.active::after { right: -8px; background: radial-gradient(circle at 100% 0, transparent 8px, #fff 8px); }
.tab.active .tab-in { border: 0; gap: 6px; }
.fav { width: 18px; height: 18px; flex: none; }
.tab-t { flex: 1; min-width: 0; font-size: 14px; color: #45494e; white-space: nowrap; overflow: hidden; -webkit-mask-image: linear-gradient(90deg, #000 65%, transparent); mask-image: linear-gradient(90deg, #000 65%, transparent); }
.tab-t.short { flex: 0 0 14px; }
.tab-ico { width: 14px; height: 14px; flex: none; }
.newtab { width: 16px; height: 16px; margin-left: 20px; flex: none; }
.tabsearch { width: 18px; height: 18px; margin-left: 80px; flex: none; }
.winctl { margin-left: auto; display: flex; align-items: center; }
.winctl svg { width: 14px; height: 18px; margin-right: 43px; }
.winctl svg:last-child { margin-right: 22px; }

.toolbar { height: 43px; display: flex; align-items: center; padding-left: 18px; background: #fff; }
.nav { width: 20px; height: 20px; margin-right: 20px; flex: none; }
.omni { margin-left: -3px; width: 1489px; height: 35px; border-radius: 18px; background: #f1f3f4; display: flex; align-items: center; padding-left: 17px; }
.lock { width: 12px; height: 16px; flex: none; }
.url { margin-left: 14px; font-size: 17.600px; color: #5f6368; letter-spacing: -.1px; white-space: nowrap; }
.url b { font-weight: 400; color: #24282c; }
.star { width: 20px; height: 20px; margin-left: auto; margin-right: 12px; }
.exts { flex: 1; display: grid; grid-template-columns: 40px 40px 40px 40px 40px 42px 38px; padding-left: 9px; align-items: center; justify-items: center; }
.exts svg { width: 20px; height: 24px; }
.exts svg.avatar { width: 26px; height: 28px; }
.ext-hi { font: 700 19px "Noto Sans CJK SC", "DejaVu Sans", sans-serif; color: #111; }

.bookmarks { height: 42px; padding-left: 20px; display: grid; grid-template-columns: 83px 108px 186px 133px 148px 190px 182px 193px 133px 180px 1fr; align-items: center; font-size: 14.800px; color: #3c4043; }
.bm { display: flex; align-items: center; gap: 10.500px; white-space: nowrap; min-width: 0; }
.bm-i { width: 17px; height: 17px; flex: none; }
.bm-i.yt { width: 21px; height: 19px; }
.bm-i.tall { height: 23px; }
.bm-badge { font: 700 7px "Liberation Sans", sans-serif; fill: #fff; text-anchor: middle; }
.bm-mix { display: inline-flex; align-items: center; margin-left: -1px; }
.monkey { width: 21px; height: 21px; }
.td { width: 17px; height: 19px; flex: none; background: #333; color: #fff; font-size: 13px; line-height: 19px; text-align: center; border-radius: 1px; margin-right: 4px; }
.bm-right { grid-column: 11; display: flex; align-items: center; gap: 11px; justify-self: end; padding-right: 18px; }
.more { color: #5f6368; padding-right: 12px; border-right: 1px solid #c8cacd; margin-right: 4px; line-height: 22px; }

/* app header */
.apphead { height: 50px; background: #1b252b; display: flex; align-items: center; padding-left: 77px; color: #d6d6d6; }
.logo { width: 48px; height: 43px; flex: none; }
.crumb { margin-left: 106px; font-family: "Noto Sans", sans-serif; font-size: 18.350px; white-space: nowrap; }
.head-right { margin-left: auto; display: flex; align-items: center; padding-right: 31px; gap: 19px; }
.head-right svg { width: 19px; height: 19px; }
.room { font-family: "Noto Sans", sans-serif; font-size: 16.200px; margin-right: -5px; }

/* main */
.main { height: 851px; display: flex; }
.sidebar { width: 500px; flex: none; background: #1e282f; position: relative; overflow: hidden; padding: 29px 0 0 58px; }
.search { width: 351px; height: 37px; border: 1px solid #72787c; border-radius: 19px; display: flex; align-items: center; gap: 9px; padding: 0 0 2px 14px; color: #a4a8ab; font-family: "Noto Sans", sans-serif; font-size: 16px; }
.search svg { width: 16px; height: 16px; margin-top: 7px; }
.list { list-style: none; margin: 54px 0 0; padding: 0; font-family: "Noto Sans", sans-serif; font-size: 16.700px; color: #6c7276; }
.list li { height: 40.900px; line-height: 40.900px; white-space: nowrap; }
.burger { position: absolute; left: 0; top: 125px; width: 38px; height: 45px; background: #03202f; display: flex; flex-direction: column; justify-content: center; gap: 7px; padding: 0 6px; }
.burger i { display: block; height: 2px; background: #e6e6e6; }
.thumb { position: absolute; left: 476px; top: 119px; width: 10px; height: 60px; border-radius: 5px; background: #03202f; }

.stage { flex: 1; display: flex; flex-direction: column; min-width: 0; }
.tools { height: 51px; flex: none; display: flex; position: relative; background: linear-gradient(#a5a5a5, #b3b3b3); border-bottom: 1px solid #8a8a8a; }
.tool { flex: none; padding-top: 5px; display: flex; flex-direction: column; align-items: center; }
.ti { height: 28px; display: flex; align-items: center; justify-content: center; }
.dim { opacity: .75; }
.tl { margin-top: 1px; font: 9.600px/12px "Liberation Sans", sans-serif; color: #3d3d3d; white-space: nowrap; }
.tl.off { color: #828282; }
.i24 { width: 24px; height: 24px; }
.w38 { width: 38px; } .w138 { width: 138px; } .w94 { width: 94px; } .w88 { width: 88px; } .w70 { width: 70px; }
.w46 { width: 46px; } .w30 { width: 30px; } .w36 { width: 36px; } .w54 { width: 54px; } .w68 { width: 68px; } .w56 { width: 56px; }
.w50 { width: 50px; }
.sep { border-left: 1px dotted #8e8e8e; }
.push6 { margin-left: 6px; }
.mr8 { margin-right: 8px; }
.seg { height: 22px; border: 1px solid #7a7a7a; border-radius: 4px; background: linear-gradient(#d2d2d2, #b9b9b9); display: flex; align-items: center; }
.colors { width: 123px; justify-content: space-between; padding-right: 8px; }
.cell-w { width: 24px; height: 100%; border-right: 1px solid #7a7a7a; display: flex; align-items: center; justify-content: center; }
.sw { display: block; width: 11px; height: 12px; }
.white { background: #fff; } .red { background: #f8450b; } .blue { background: #6bb5f5; } .green { background: #7cea5c; } .yellow { background: #f5e60c; }
.lines { width: 74px; }
.lines span { flex: 1; height: 100%; display: flex; align-items: center; justify-content: center; border-right: 1px solid #7a7a7a; }
.lines span:last-child { border: 0; }
.lines .on { background: #b5b5b5; }
.ln { display: block; width: 10px; background: #111; }
.l1 { height: 2px; } .l2 { height: 3px; } .l3 { height: 7px; }
.erasers { width: 74px; }
.erasers span { flex: 1; height: 100%; display: flex; align-items: center; justify-content: center; }
.erasers .last { border-left: 1px solid #7a7a7a; }
.dot { display: block; background: #111; border-radius: 50%; }
.d1 { width: 4px; height: 4px; } .d2 { width: 7px; height: 7px; } .d3 { width: 11px; height: 14px; }
.tools-right { margin-left: auto; display: flex; }
.caret { width: 10px; font-size: 9px; color: #444; padding-top: 36px; }
.cursor { position: absolute; left: 870px; top: 0; width: 10px; height: 15px; }

.canvas { height: 748px; flex: none; background: #000; position: relative; overflow: hidden; }
.board { position: absolute; inset: 0; width: 1420px; height: 748px; }
.edge { stroke: #262626; stroke-width: 1.500; fill: none; }
.gridlines path { stroke: #62dd4c; stroke-width: 2.500; fill: none; }
.strokes path { stroke: #f0f0f0; stroke-width: 2; fill: none; stroke-linecap: round; stroke-linejoin: round; }
.strokes .grn { stroke: #62dd4c; }
.ink text, .cells text { font-family: "Liberation Serif", serif; font-style: italic; }
.ink.green text { fill: #5edc48; }
.ink.white text { fill: #f2f2f2; }
.big { font-size: 42px; }
.bigg { font-size: 50px; }
.num { font-size: 24px; }
.lnum { font-size: 28px; }
.mid { font-size: 22px; }
.xl { font-size: 42px; }
.huge { font-size: 52px; }
.box { font-size: 38px; }
.cells text { fill: #f4f4f4; font-size: 96px; text-anchor: middle; }
.cells .c-lg { font-size: 130px; }
.cells .c-sm { font-size: 74px; }

.side-tab { position: absolute; top: 12px; background: linear-gradient(#b5b5b5, #8e8e8e); border: 1px solid #777; display: flex; align-items: center; justify-content: center; }
.side-tab svg { width: 12px; height: 30px; }
.side-tab.left { left: 3px; width: 17px; height: 37px; border-radius: 0 3px 3px 0; }
.side-tab.right { right: 0; width: 21px; height: 35px; border-radius: 4px 0 0 4px; }
.dock { position: absolute; left: 455px; top: 695px; width: 511px; height: 49px; background: #3d3d3d; border: 3px solid #8e8e8e; border-top-width: 4px; border-top-color: #b5b5b5; border-radius: 8px; padding: 4px; box-shadow: inset 0 0 0 2px #555; }
.dock svg { display: block; width: 100%; height: 100%; }
.magnifier { position: absolute; left: 1342px; top: 673px; width: 70px; height: 62px; background: #3a3a3a; border-radius: 5px; display: flex; flex-direction: column; align-items: center; color: #c4c8cc; font-size: 16px; }
.magnifier svg { width: 22px; height: 26px; margin-top: 6px; }
.magnifier span { margin-top: 5px; margin-left: 12px; }
.controls { position: absolute; left: 0; right: 0; bottom: 0; height: 38px; background: rgba(52, 70, 85, .6); display: flex; align-items: center; color: #3dbb91; }
.ctl { display: flex; justify-content: center; align-items: center; }
.ico16 { width: 14px; height: 16px; }
.ico20 { width: 20px; height: 20px; }
.bar { margin-left: 13px; width: 1074px; height: 4px; display: flex; align-items: center; }
.played { width: 687px; height: 4px; background: #fff; }
.knob { width: 7px; height: 9px; border-radius: 50%; background: #3dbb91; flex: none; margin: 0 -3px; position: relative; }
.buffered { width: 358px; height: 4px; background: #5f7590; }
.rest { flex: 1; height: 4px; background: #7a8ea8; }
.time { margin-left: 25px; font-size: 12.500px; width: 60px; white-space: nowrap; }
.speed { font-size: 19px; width: 40px; text-align: center; margin-left: 4px; }
.pip { width: 22px; height: 20px; margin-left: 18px; flex: none; }
.fs { width: 15px; height: 16px; margin-left: 33px; flex: none; }
.foot { flex: 1; background: #29333f; }

/* taskbar */
.taskbar { height: 50px; display: flex; align-items: center; background: linear-gradient(90deg, #d8dadc 0, #cfe1e6 28%, #c9dde2 70%, #d8d7d5 100%); }
.start { width: 20px; height: 20px; margin: 0 21px 0 20px; flex: none; }
.tsearch { width: 429px; height: 48px; background: #fff; display: flex; align-items: center; gap: 14px; padding-left: 15px; flex: none; font-family: "Noto Sans", sans-serif; font-size: 17.900px; color: #222; margin-right: 2px; }
.tsearch svg { width: 20px; height: 20px; }
.apps { display: flex; height: 50px; flex: none; }
.app { width: 62px; height: 50px; display: flex; align-items: center; justify-content: center; position: relative; }
.app svg { width: 30px; height: 32px; }
.app.act { background: #e8f2f5; }
.app.run::after { content: ""; position: absolute; left: 6px; right: 6px; bottom: 0; height: 3px; background: #0078d4; }
.app.act::after { left: 0; right: 0; }
.app.part::after { left: 7px; right: 3px; background: linear-gradient(90deg, #0078d4 80%, #66aee6 80%); }
.ltile { width: 30px; height: 30px; background: #fff; color: #000; font: 700 24px/30px "Liberation Sans", sans-serif; text-align: center; }
.count { position: absolute; left: 38px; top: 25px; width: 24px; height: 20px; border-radius: 50%; background: #c9d2d5; border: 1px solid #666; font-size: 12px; line-height: 18px; text-align: center; color: #111; }
.tray { flex: 1; display: flex; align-items: center; color: #222; font-size: 18px; }
.battery { margin-left: 175px; width: 61px; height: 25px; border: 2px solid #fff; background: #000; display: flex; align-items: stretch; color: #fff; font-size: 19px; line-height: 21px; flex: none; }
.battery i { width: 11px; background: #f7a616; }
.battery span { padding-left: 1px; }
.sun { width: 26px; height: 28px; margin-left: 138px; flex: none; }
.temp { margin-left: 12px; font-family: "Noto Sans", sans-serif; font-size: 16px; }
.haze { margin-left: 10px; font-family: "Noto Sans", sans-serif; font-size: 16px; }
.chev { width: 16px; height: 10px; margin-left: 25px; flex: none; }
.eng { margin-left: 16px; font-size: 14px; }
.clock { margin-left: 15px; width: 76px; display: flex; flex-direction: column; align-items: center; gap: 7px; font-size: 14px; line-height: 16px; white-space: nowrap; }
.notif { width: 20px; height: 20px; margin-left: 26px; flex: none; }
```
